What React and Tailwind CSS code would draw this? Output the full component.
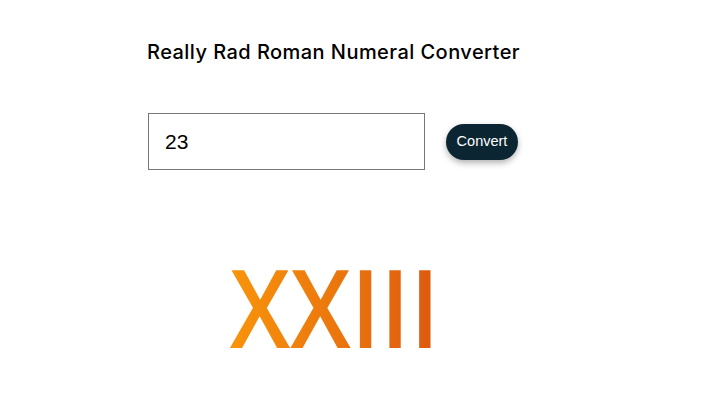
import React from "react";

export default function App() {
  return (
    <div className="w-[720px] h-[417px] bg-white overflow-hidden">
      <div className="ml-[147px] w-[372px] pt-[40px] flex flex-col">
        <h1 className="text-[20px] leading-[24px] font-medium tracking-[0.45px] text-black font-['Inter',sans-serif] whitespace-nowrap">
          Really Rad Roman Numeral Converter
        </h1>

        <div className="mt-[49px] ml-[1px] flex items-center gap-[21px]">
          <input
            type="text"
            defaultValue="23"
            className="w-[277px] h-[57px] border border-[#767676] pl-[16px] text-[21px] text-black font-['Liberation_Sans',Arial,sans-serif] outline-none"
          />
          <button className="w-[72px] h-[36px] rounded-full bg-[#0b2532] text-white text-[14.5px] font-['Liberation_Sans',Arial,sans-serif] shadow-[0_3px_6px_rgba(0,0,0,0.3)]">
            Convert
          </button>
        </div>

        <div className="mt-[83px] flex justify-center pl-[4px]">
          <p className="text-[108px] leading-none font-['Open_Sans',sans-serif] font-semibold scale-x-[0.9] bg-gradient-to-r from-[#f8940a] to-[#dd580e] bg-clip-text text-transparent">
            XXIII
          </p>
        </div>
      </div>
    </div>
  );
}
